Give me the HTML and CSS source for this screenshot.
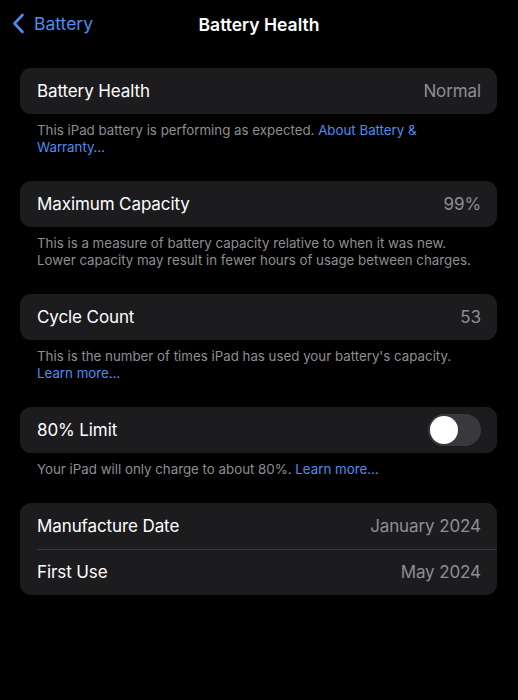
FILE: index.html
```html
<!DOCTYPE html>
<html lang="en">

<head>
    <meta charset="UTF-8">
    <meta name="viewport" content="width=device-width, initial-scale=1.0">
    <title>Battery Health</title>
    <link rel="stylesheet" href="styles.css">
</head>

<body>
    <div class="nav">
        <a class="back" href="#">
            <svg class="chevron" width="13" height="21" viewBox="0 0 13 21">
                <path d="M10.5 2 L2.5 10.5 L10.5 19" fill="none" stroke="currentColor" stroke-width="2.6"
                    stroke-linecap="round" stroke-linejoin="round" />
            </svg>
            <span>Battery</span>
        </a>
        <div class="title">Battery Health</div>
    </div>

    <div class="content">
        <div class="group">
            <div class="row">
                <span class="label">Battery Health</span>
                <span class="value">Normal</span>
            </div>
        </div>
        <p class="footer">This iPad battery is performing as expected. <a href="#">About Battery &amp;</a><br><a
                href="#">Warranty…</a></p>

        <div class="group">
            <div class="row">
                <span class="label">Maximum Capacity</span>
                <span class="value">99%</span>
            </div>
        </div>
        <p class="footer">This is a measure of battery capacity relative to when it was new. Lower capacity may
            result in fewer hours of usage between charges.</p>

        <div class="group">
            <div class="row">
                <span class="label">Cycle Count</span>
                <span class="value">53</span>
            </div>
        </div>
        <p class="footer">This is the number of times iPad has used your battery's capacity.<br><a href="#">Learn
                more…</a></p>

        <div class="group">
            <div class="row">
                <span class="label">80% Limit</span>
                <span class="toggle"><span class="knob"></span></span>
            </div>
        </div>
        <p class="footer">Your iPad will only charge to about 80%. <a href="#">Learn more…</a></p>

        <div class="group">
            <div class="row">
                <span class="label">Manufacture Date</span>
                <span class="value">January 2024</span>
            </div>
            <div class="row">
                <span class="label">First Use</span>
                <span class="value">May 2024</span>
            </div>
        </div>
    </div>
</body>

</html>
```

FILE: styles.css
```css
:root {
    --card-color: #1c1c1e;
    --link-color: #4b8ef0;
    --muted-color: #8e8e93;
    --border-radius: 11px;
}

body {
    font-family: Inter, 'Noto Sans', sans-serif;
    margin: 0;
    background: #000;
    color: #fff;
    min-height: 100vh;
}

.nav {
    height: 48px;
    display: flex;
    align-items: center;
    justify-content: center;
    position: relative;
}

.back {
    position: absolute;
    left: 12px;
    top: 13px;
    display: flex;
    align-items: center;
    gap: 9px;
    color: var(--link-color);
    text-decoration: none;
    font-size: 17.5px;
}

.chevron {
    display: block;
}

.title {
    font-size: 17.5px;
    font-weight: 600;
}

.content {
    padding: 20px 21px 0 20px;
}

.group {
    background: var(--card-color);
    border-radius: var(--border-radius);
    overflow: hidden;
}

.row {
    height: 46px;
    display: flex;
    align-items: center;
    justify-content: space-between;
    padding: 0 16px 0 17px;
    font-size: 17px;
    letter-spacing: -0.1px;
    position: relative;
}

.row + .row::before {
    content: "";
    position: absolute;
    left: 17px;
    right: 0;
    top: 0;
    border-top: 1px solid #38383a;
}

.value {
    color: var(--muted-color);
}

.toggle {
    width: 53px;
    height: 32px;
    border-radius: 16px;
    background: #39393d;
    display: flex;
    align-items: center;
    padding: 2px;
    box-sizing: border-box;
}

.knob {
    width: 28px;
    height: 28px;
    border-radius: 50%;
    background: #fff;
}

.footer {
    margin: 8px 0 25px;
    padding: 0 17px;
    font-size: 13.3px;
    line-height: 17px;
    color: var(--muted-color);
}

.footer a {
    color: var(--link-color);
    text-decoration: none;
}
```
